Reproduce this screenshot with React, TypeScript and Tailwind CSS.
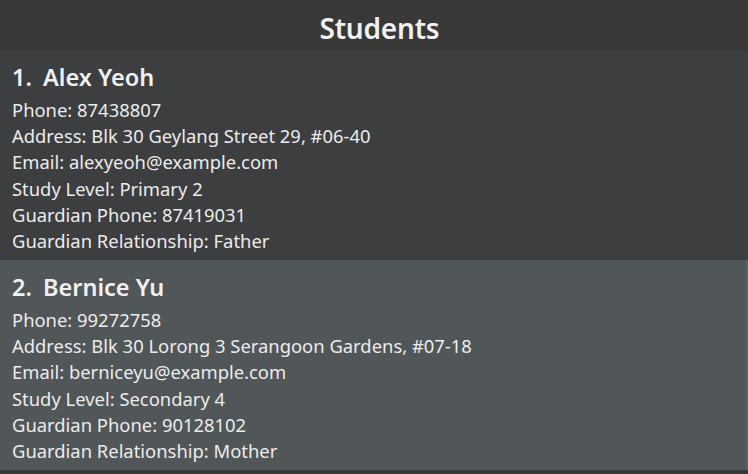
const students = [
  {
    id: 1,
    name: 'Alex Yeoh',
    phone: '87438807',
    address: 'Blk 30 Geylang Street 29, #06-40',
    email: 'alexyeoh@example.com',
    level: 'Primary 2',
    guardianPhone: '87419031',
    relationship: 'Father',
  },
  {
    id: 2,
    name: 'Bernice Yu',
    phone: '99272758',
    address: 'Blk 30 Lorong 3 Serangoon Gardens, #07-18',
    email: 'berniceyu@example.com',
    level: 'Secondary 4',
    guardianPhone: '90128102',
    relationship: 'Mother',
  },
];

export default function App() {
  return (
    <div className="w-[748px] h-[474px] bg-[#383838] overflow-hidden font-['Noto_Sans',sans-serif] text-[#f0f0f0]">
      <div className="h-[50px] flex items-center justify-center pt-[5px] pl-[11px]">
        <h1 className="text-[28px] font-semibold tracking-[-0.2px]">Students</h1>
      </div>
      {students.map((s, i) => (
        <div
          key={s.id}
          className={`h-[210px] pl-3 pt-[12px] ${i % 2 === 0 ? 'bg-[#3c3e3f]' : 'bg-[#515658] border-r-2 border-[#5c6163]'}`}
        >
          <div className="flex items-baseline text-[23.5px] font-semibold h-[30px] leading-[30px]">
            <span className="w-[31px]">{s.id}.</span>
            <span>{s.name}</span>
          </div>
          <div className="text-[18.4px] leading-[26.2px] mt-[5px] text-[#ececec]">
            <div>Phone: {s.phone}</div>
            <div>Address: {s.address}</div>
            <div>Email: {s.email}</div>
            <div>Study Level: {s.level}</div>
            <div>Guardian Phone: {s.guardianPhone}</div>
            <div>Guardian Relationship: {s.relationship}</div>
          </div>
        </div>
      ))}
    </div>
  );
}
